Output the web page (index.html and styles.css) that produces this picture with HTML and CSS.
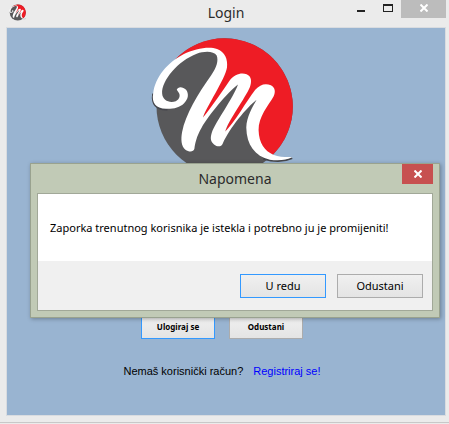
FILE: index.html
```html
<!DOCTYPE html>
<html lang="hr">
<head>
<meta charset="utf-8">
<title>Login</title>
<link rel="stylesheet" href="styles.css">
</head>
<body>
<svg class="defs" aria-hidden="true">
  <symbol id="logo" viewBox="30 20 435 418">
    <circle cx="254" cy="229" r="205" fill="#58585a"/>
    <path fill="#ee1c25" d="M101 92A205 205 0 0 1 254 24A205 205 0 0 1 399 374L365 368 338 310 345 260 385 190 375 175 252 312 315 165 300 145 186 268 245 110 240 70 200 55Z"/>
    <path class="script-shadow" d="M39 190C34 222 48 239 82 238"/>
    <path class="script-shadow" d="M370 386C405 396 435 394 457 384"/>
    <path fill="#fff" d="M39 190C45 140 82 97 130 72C165 55 207 47 231 56C255 65 264 87 261 112C256 146 198 232 189 262C222 220 245 186 268 152C284 131 304 127 320 132C335 138 336 154 330 170C318 200 262 276 256 304C286 276 317 216 346 179C360 162 377 158 393 165C407 173 407 186 401 199C386 225 355 260 356 300C357 341 375 363 400 374C420 382 439 381 458 381C439 391 413 393 390 389C345 378 320 345 319 292C320 260 337 232 350 209C320 233 270 292 248 341C243 352 231 350 222 343C212 336 210 325 215 309C227 275 280 204 294 163C261 188 206 256 185 292C169 319 165 341 163 356C160 367 146 366 136 359C123 350 122 327 126 306C136 254 174 190 213 136C230 112 236 92 230 76C221 61 193 62 170 70C115 91 64 149 66 190C67 211 89 220 107 213C119 208 121 195 116 188L110 179C113 168 128 168 138 179C147 191 145 207 132 219C119 232 99 237 78 236C46 235 34 217 39 190Z"/>
  </symbol>
</svg>
<main class="window">
  <header class="titlebar">
    <svg class="app-icon" aria-hidden="true"><use href="#logo"/></svg>
    <h1 class="title">Login</h1>
    <div class="controls">
      <button class="control" aria-label="Minimiziraj"><svg width="9" height="9" viewBox="0 0 9 9"><path d="M1 6h8v2H1z" fill="#222"/></svg></button>
      <button class="control" aria-label="Maksimiziraj"><svg width="10" height="9" viewBox="0 0 10 9"><path fill-rule="evenodd" d="M0 0h10v8H0zM1 2v5h8V2z" fill="#222"/></svg></button>
      <button class="control close" aria-label="Zatvori"><svg width="8" height="8" viewBox="0 0 8 8"><path d="M0.500 0.500l7 7m0-7l-7 7" stroke="#fff" stroke-width="2"/></svg></button>
    </div>
  </header>
  <section class="client">
    <svg class="logo" role="img" aria-label="M"><use href="#logo"/></svg>
    <div class="form-actions">
      <button class="button small primary">Ulogiraj se</button>
      <button class="button small">Odustani</button>
    </div>
    <p class="register"><span>Nemaš korisnički račun?</span><a href="#">Registriraj se!</a></p>
  </section>
</main>
<section class="dialog" role="dialog" aria-labelledby="dialog-title">
  <header class="dialog-bar">
    <h2 class="title" id="dialog-title">Napomena</h2>
    <button class="dialog-close" aria-label="Zatvori"><svg width="8" height="8" viewBox="0 0 8 8"><path d="M0.500 0.500l7 7m0-7l-7 7" stroke="#fff" stroke-width="2"/></svg></button>
  </header>
  <div class="dialog-body">
    <p class="message">Zaporka trenutnog korisnika je istekla i potrebno ju je promijeniti!</p>
    <footer class="dialog-actions">
      <button class="button primary">U redu</button>
      <button class="button">Odustani</button>
    </footer>
  </div>
</section>
</body>
</html>
```
FILE: styles.css
```css
* { box-sizing: border-box; }

body {
  margin: 0;
  background: #ebebeb;
  color: #000;
  font-family: "Noto Sans", "Open Sans", sans-serif;
  font-size: 11px;
}

h1, h2, p { margin: 0; }

button { font: inherit; color: inherit; padding: 0; }

.defs { position: absolute; width: 0; height: 0; }

.script-shadow { fill: none; stroke: #45464c; stroke-width: 6; }

.window {
  padding: 0 3px 6px 6px;
  border-bottom: 1px solid #c8c8c8;
}

.titlebar {
  display: grid;
  grid-template-columns: 1fr auto 1fr;
  height: 27px;
}

.title {
  font-size: 14px;
  font-weight: 400;
  line-height: 26px;
  color: #2b2b2b;
}

.app-icon { width: 17px; height: 17px; margin: 4px 0 0 3px; }

.controls { display: flex; justify-content: flex-end; }

.control {
  display: flex;
  justify-content: center;
  width: 27px;
  height: 18px;
  padding-top: 4px;
  border: 0;
  background: none;
}

.control.close { width: 45px; background: #bcbcbc; }

.client {
  display: flex;
  flex-direction: column;
  align-items: center;
  padding: 9px 0 36px;
  border: 1px solid #d9dce0;
  background: #99b4d1;
}

.logo { width: 145px; height: 139px; margin-right: 8px; }

.form-actions {
  display: flex;
  gap: 14px;
  margin: 139px 8px 0 0;
}

.button {
  width: 87px;
  height: 24px;
  border: 1px solid #acacac;
  background: linear-gradient(#f0f0f0, #e4e4e4);
  line-height: 20px;
}

.button.primary { border-color: #3399ff; }

.button.small {
  width: 74px;
  font-size: 8px;
  font-weight: 700;
}

.form-actions,
.register { margin-right: 8px; }

.register {
  display: flex;
  gap: 10px;
  margin-top: 24px;
  font-family: "Liberation Sans", sans-serif;
  line-height: 16px;
}

.register a { color: #0000ff; text-decoration: none; }

.dialog {
  position: absolute;
  top: 163px;
  left: 30px;
  right: 9px;
  padding: 0 6px 6px;
  border: 1px solid #99a28f;
  background: #c1cab6;
  box-shadow: 1px 1px 4px rgba(0, 0, 0, 0.3);
}

.dialog-bar {
  display: grid;
  grid-template-columns: 1fr auto 1fr;
  height: 29px;
}

.dialog-bar .title { grid-column: 2; line-height: 29px; }

.dialog-close {
  display: flex;
  align-items: center;
  justify-content: center;
  justify-self: end;
  width: 31px;
  height: 20px;
  border: 0;
  background: #c75050;
}

.dialog-body {
  border: 1px solid #a1a898;
  background: #fff;
}

.message { padding: 24px 12px; line-height: 19px; }

.dialog-actions {
  display: flex;
  justify-content: flex-end;
  gap: 11px;
  padding: 13px 9px 12px;
  background: #f0f0f0;
}

.dialog-actions .button { width: 86px; }
```
